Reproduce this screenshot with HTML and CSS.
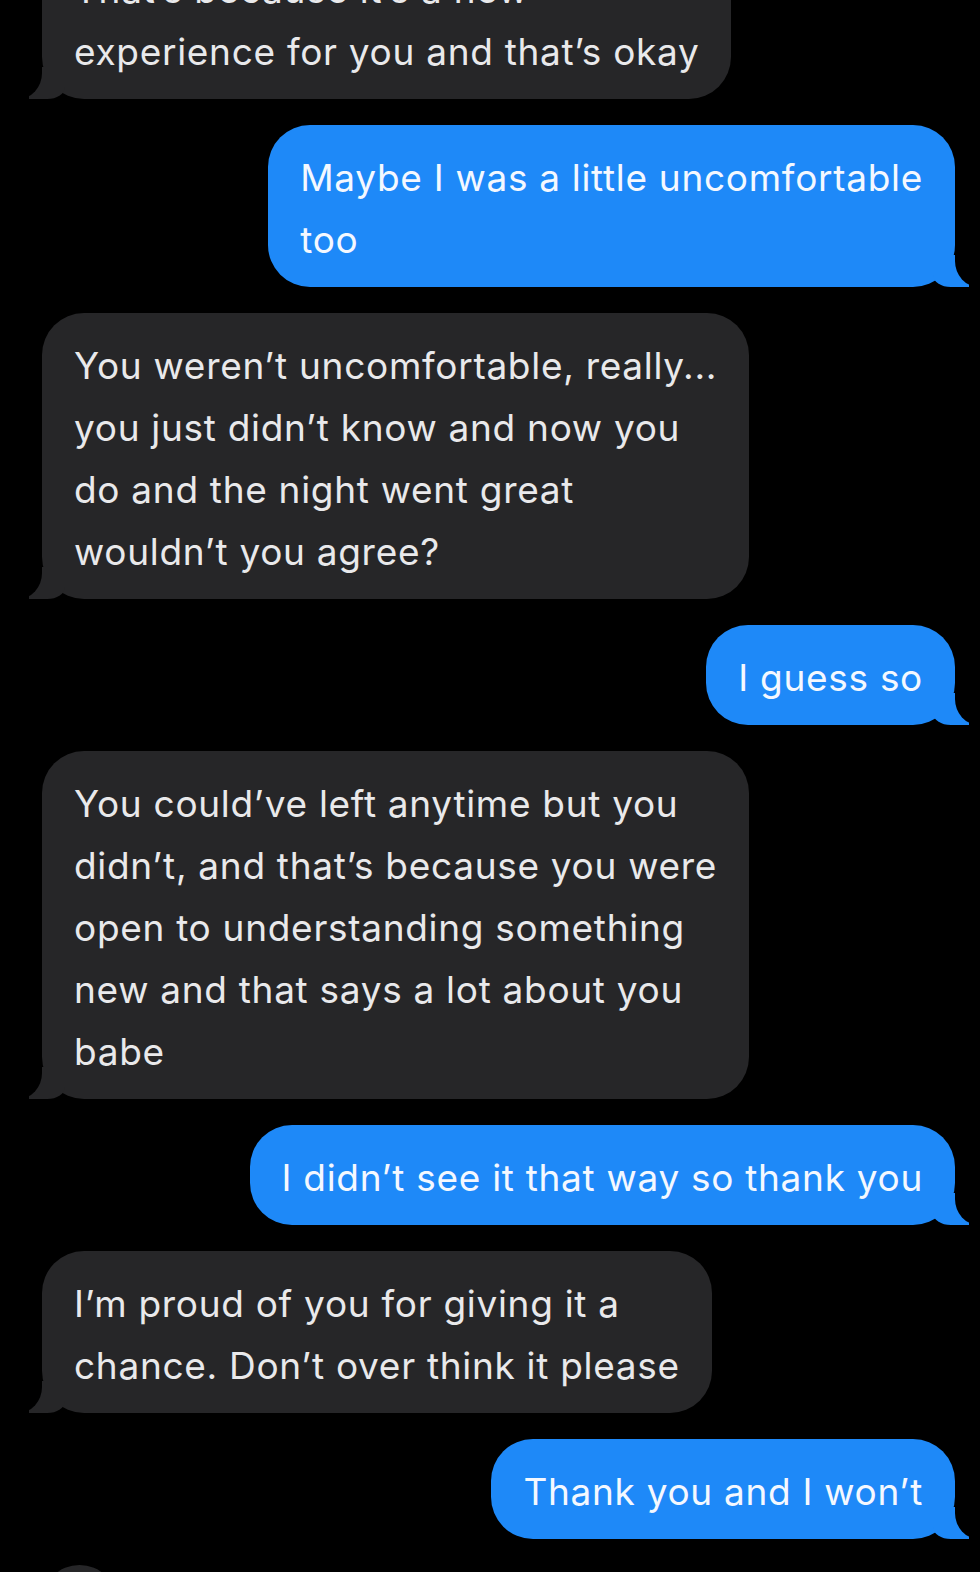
FILE: index.html
```html
<!DOCTYPE html>
<html lang="en">
<head>
<meta charset="utf-8">
<title>Messages</title>
<link rel="stylesheet" href="styles.css">
</head>
<body>
<main class="thread">
  <div class="bubble them">That’s because it’s a new<br>experience for you and that’s okay</div>
  <div class="bubble me">Maybe I was a little uncomfortable<br>too</div>
  <div class="bubble them">You weren’t uncomfortable, really...<br>you just didn’t know and now you<br>do and the night went great<br>wouldn’t you agree?</div>
  <div class="bubble me">I guess so</div>
  <div class="bubble them">You could’ve left anytime but you<br>didn’t, and that’s because you were<br>open to understanding something<br>new and that says a lot about you<br>babe</div>
  <div class="bubble me">I didn’t see it that way so thank you</div>
  <div class="bubble them">I’m proud of you for giving it a<br>chance. Don’t over think it please</div>
  <div class="bubble me">Thank you and I won’t</div>
  <div class="bubble them">&nbsp;</div>
</main>
</body>
</html>
```

FILE: styles.css
```css
html, body {
  margin: 0;
  padding: 0;
  background: #000;
}
body {
  width: 980px;
  height: 1572px;
  overflow: hidden;
  font-family: Inter, "Noto Sans", "Liberation Sans", sans-serif;
}
.thread {
  display: flex;
  flex-direction: column;
  gap: 26px;
  margin-top: -63px;
  padding: 0 25px 0 42px;
}
.bubble {
  position: relative;
  width: fit-content;
  white-space: nowrap;
  padding: 22px 32px 16px;
  font-size: 37px;
  letter-spacing: 0.7px;
  line-height: 62px;
  border-radius: 42px;
  color: #e9e9eb;
}
.bubble::before,
.bubble::after {
  content: "";
  position: absolute;
  bottom: 0;
}
.them {
  align-self: flex-start;
  background: #262628;
}
.me {
  align-self: flex-end;
  background: #1e89f8;
  color: #f4f8ff;
}
.them::before {
  left: -13px;
  width: 36px;
  height: 32px;
  background: #262628;
  border-bottom-right-radius: 18px 12px;
}
.them::after {
  left: -34px;
  width: 34px;
  height: 36px;
  background: #000;
  border-bottom-right-radius: 24px 26px;
}
.me::before {
  right: -14px;
  width: 36px;
  height: 32px;
  background: #1e89f8;
  border-bottom-left-radius: 18px 12px;
}
.me::after {
  right: -34px;
  width: 34px;
  height: 36px;
  background: #000;
  border-bottom-left-radius: 24px 26px;
}
```
